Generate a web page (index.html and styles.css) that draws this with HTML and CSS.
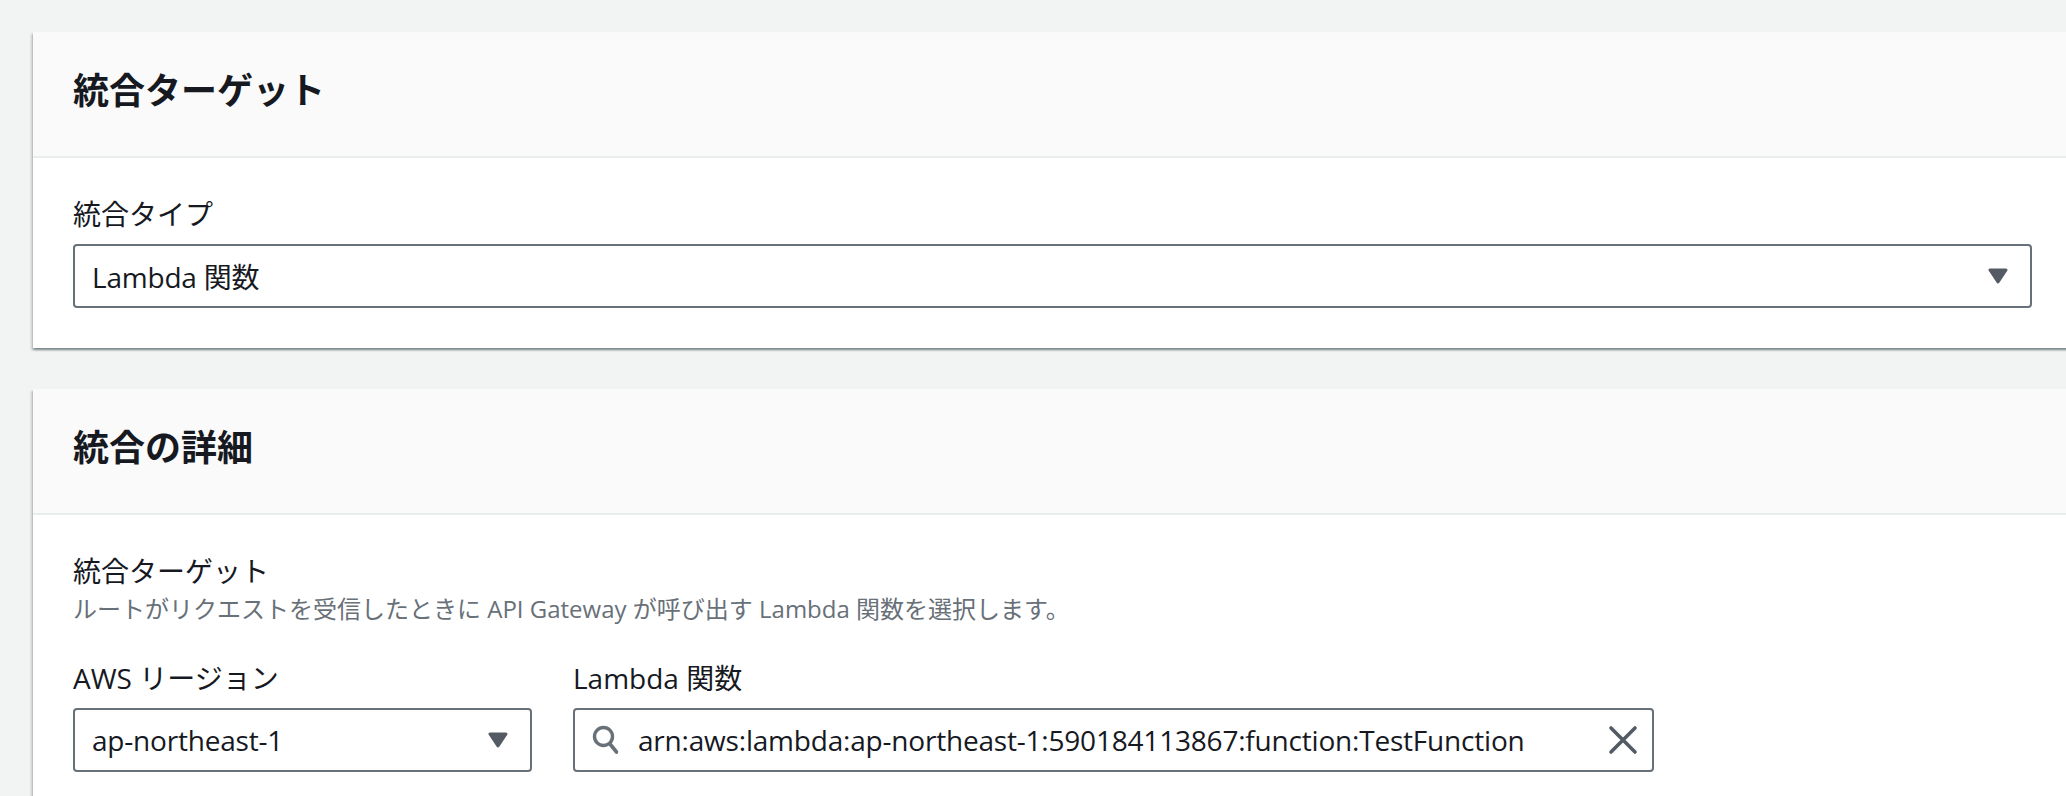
FILE: index.html
```html
<!DOCTYPE html>
<html lang="ja">
<head>
  <meta charset="UTF-8">
  <meta name="viewport" content="width=device-width, initial-scale=1.0">
  <title>統合の設定</title>
  <link rel="stylesheet" href="styles.css">
</head>
<body>
  <main class="page">
    <section class="panel">
      <header class="panel-header">
        <h2>統合ターゲット</h2>
      </header>
      <div class="panel-body">
        <div class="field">
          <label class="field-label">統合タイプ</label>
          <div class="select">
            <span class="select-value">Lambda 関数</span>
            <svg class="caret" width="20" height="16" viewBox="0 0 20 16"><polygon points="2,2 18,2 10,14" fill="#545b64" stroke="#545b64" stroke-width="3" stroke-linejoin="round"/></svg>
          </div>
        </div>
      </div>
    </section>

    <section class="panel">
      <header class="panel-header">
        <h2>統合の詳細</h2>
      </header>
      <div class="panel-body">
        <div class="field-head">
          <div class="field-label">統合ターゲット</div>
          <div class="field-desc">ルートがリクエストを受信したときに API Gateway が呼び出す Lambda 関数を選択します。</div>
        </div>
        <div class="field-row">
          <div class="field region">
            <label class="field-label">AWS リージョン</label>
            <div class="select">
              <span class="select-value">ap-northeast-1</span>
              <svg class="caret" width="20" height="16" viewBox="0 0 20 16"><polygon points="2,2 18,2 10,14" fill="#545b64" stroke="#545b64" stroke-width="3" stroke-linejoin="round"/></svg>
            </div>
          </div>
          <div class="field lambda">
            <label class="field-label">Lambda 関数</label>
            <div class="search">
              <!-- magnifier -->
              <svg class="search-icon" width="28" height="30" viewBox="0 0 28 30"><circle cx="11.5" cy="11.5" r="9" fill="none" stroke="#687078" stroke-width="3.4"/><line x1="18" y1="19" x2="24.5" y2="27" stroke="#687078" stroke-width="3.6" stroke-linecap="round"/></svg>
              <span class="search-value">arn:aws:lambda:ap-northeast-1:590184113867:function:TestFunction</span>
              <!-- clear button -->
              <svg class="clear-icon" width="30" height="30" viewBox="0 0 30 30"><path d="M3 3 L27 27 M27 3 L3 27" stroke="#545b64" stroke-width="3.6" stroke-linecap="round"/></svg>
            </div>
          </div>
        </div>
      </div>
    </section>
  </main>
</body>
</html>
```

FILE: styles.css
```css
body {
  margin: 0;
  background: #f2f3f3;
  color: #16191f;
  font-family: "Open Sans", "Noto Sans CJK JP", sans-serif;
  font-size: 28px;
  overflow: hidden;
}
.page {
  padding: 32px 0 0 33px;
}
.panel {
  width: 2039px;
  background: #fff;
  margin-bottom: 41px;
  box-shadow: 0 2px 2px rgba(0, 28, 36, 0.3), 2px 2px 2px rgba(0, 28, 36, 0.15), -2px 2px 2px rgba(0, 28, 36, 0.15);
}
.panel-header {
  background: #fafafa;
  padding: 37px 40px 43px;
  border-bottom: 2px solid #eaeded;
}
.panel-header h2 {
  margin: 0;
  font-size: 36px;
  line-height: 44px;
  font-weight: 700;
}
.panel-body {
  padding: 34px 40px 40px;
}
.field-label {
  display: block;
  line-height: 44px;
  margin-bottom: 8px;
}
.field-head .field-label {
  margin-bottom: 0;
}
.field-desc {
  font-size: 24px;
  line-height: 32px;
  color: #687078;
}
.field-row {
  display: flex;
  gap: 41px;
  margin-top: 31px;
}
.region {
  width: 459px;
}
.lambda {
  width: 1081px;
}
.select,
.search {
  box-sizing: border-box;
  height: 64px;
  border: 2px solid #687078;
  border-radius: 4px;
  display: flex;
  align-items: center;
  letter-spacing: -0.2px;
}
.select {
  padding: 0 22px 0 17px;
  justify-content: space-between;
}
.search {
  padding: 0 14px 0 17px;
}
.search-icon {
  margin-right: 18px;
}
.search-value {
  flex: 1;
}
```
